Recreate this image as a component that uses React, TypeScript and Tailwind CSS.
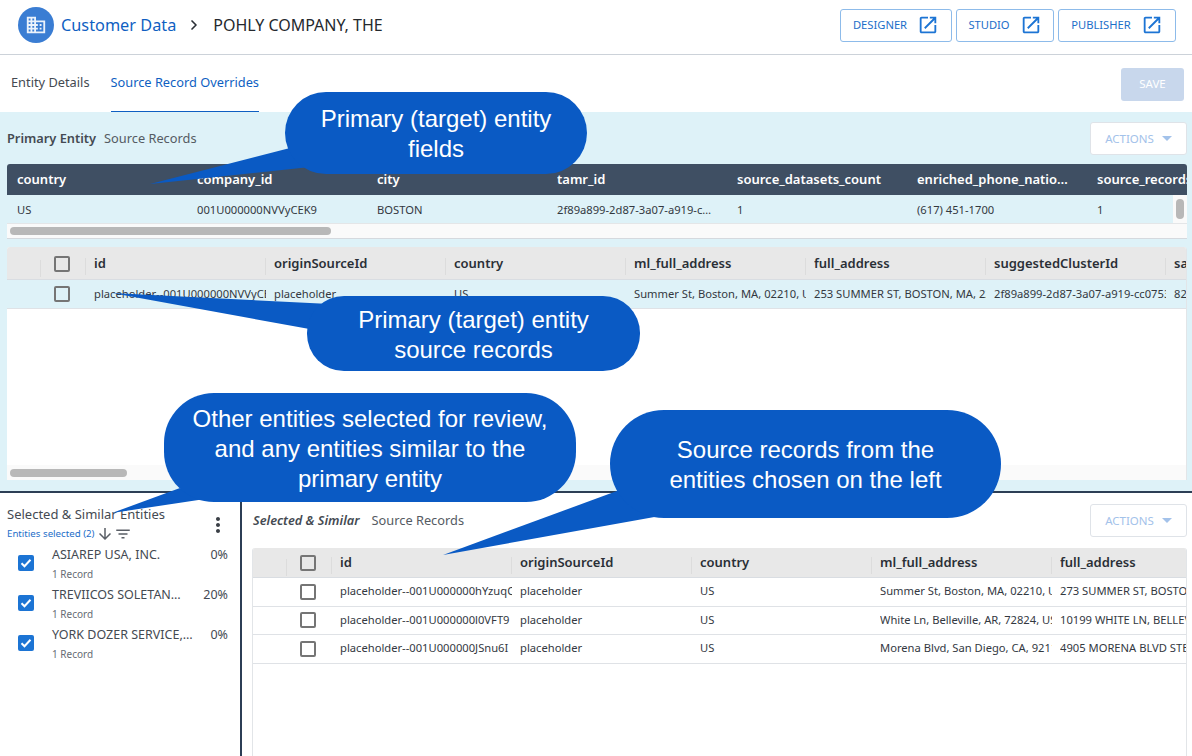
import { ChevronRight } from "lucide-react";

const font = "font-['Noto_Sans',sans-serif]";

const entityColumns = ["country", "company_id", "city", "tamr_id", "source_datasets_count", "enriched_phone_natio…", "source_records"];
const entityRow = ["US", "001U000000NVVyCEK9", "BOSTON", "2f89a899-2d87-3a07-a919-c…", "1", "(617) 451-1700", "1"];

const sourceColumns = ["id", "originSourceId", "country", "ml_full_address", "full_address", "suggestedClusterId", "sa"];
const primaryRow = [
  "placeholder--001U000000NVVyCEK9",
  "placeholder",
  "US",
  "Summer St, Boston, MA, 02210, USA",
  "253 SUMMER ST, BOSTON, MA, 22",
  "2f89a899-2d87-3a07-a919-cc0753",
  "82",
];
const similarRows = [
  ["placeholder--001U000000hYzuqQ", "placeholder", "US", "Summer St, Boston, MA, 02210, USA", "273 SUMMER ST, BOSTON"],
  ["placeholder--001U000000l0VFT9", "placeholder", "US", "White Ln, Belleville, AR, 72824, USA", "10199 WHITE LN, BELLEVILLE"],
  ["placeholder--001U000000JSnu6I", "placeholder", "US", "Morena Blvd, San Diego, CA, 92117", "4905 MORENA BLVD STE 1"],
];
const entities = [
  { name: "ASIAREP USA, INC.", pct: "0%" },
  { name: "TREVIICOS SOLETAN…", pct: "20%" },
  { name: "YORK DOZER SERVICE,…", pct: "0%" },
];

const ExternalIcon = () => (
  <svg viewBox="0 0 24 24" className="size-[22px] fill-[#1c74d4]">
    <path d="M19 19H5V5h7V3H5c-1.11 0-2 .9-2 2v14c0 1.1.89 2 2 2h14c1.1 0 2-.9 2-2v-7h-2v7zM14 3v2h3.59l-9.83 9.83 1.41 1.41L19 6.41V10h2V3h-7z" />
  </svg>
);

const LinkButton = ({ label, width }: { label: string; width: string }) => (
  <button className={`${width} h-[33px] flex items-center justify-center gap-2.5 rounded-[3px] border border-[#8dbbea] bg-white text-[11.2px] text-[#1c6ec9]`}>
    {label}
    <ExternalIcon />
  </button>
);

const ActionsButton = () => (
  <button className="w-[97px] h-[33px] flex items-center justify-center gap-2 rounded-[3px] border border-[#dfe3e8] bg-white text-[11.5px] text-[#a3c2ea]">
    ACTIONS
    <span className="w-0 h-0 border-x-[5px] border-x-transparent border-t-[5px] border-t-[#a3c2ea]" />
  </button>
);

const Checkbox = () => <span className="block size-4 rounded-[2px] border-2 border-[#757575] bg-transparent" />;

const Checked = () => (
  <span className="size-4 rounded-[2px] bg-[#1c74d4] flex items-center justify-center">
    <svg viewBox="0 0 16 16" className="size-4 fill-none stroke-white stroke-2">
      <path d="M3.5 8.2l3 3 6-6.4" />
    </svg>
  </span>
);

const Cell = ({ children, head }: { children: string; head?: boolean }) => (
  <div className={`w-[172px] mr-2 flex-none overflow-hidden whitespace-nowrap ${head ? "text-[13px] font-semibold text-[#2a2f36]" : "text-[11.2px] text-[#33383f]"}`}>
    {children}
  </div>
);

const Divider = ({ pos }: { pos: string }) => <span className={`absolute ${pos} top-1 h-[17px] w-px bg-[#dcdcdc]`} />;

const SourceHead = ({ columns, height }: { columns: string[]; height: string }) => (
  <div className={`flex flex-none items-center ${height} bg-[#e8e8e8] border-b border-[#d9dde2]`}>
    <div className="w-[87px] flex-none flex justify-center pl-[23px] relative">
      <Divider pos="left-[33px]" />
      <Checkbox />
    </div>
    {columns.map((c) => (
      <div key={c} className="relative">
        <Divider pos="-left-[9px]" />
        <Cell head>{c}</Cell>
      </div>
    ))}
  </div>
);

const SourceRow = ({ cells, tint, height }: { cells: string[]; tint?: boolean; height: string }) => (
  <div className={`flex flex-none items-center ${height} border-b border-[#dfe2e6] ${tint ? "bg-[#def2f8]" : "bg-white"}`}>
    <div className="w-[87px] flex-none flex justify-center pl-[23px]">
      <Checkbox />
    </div>
    {cells.map((c, i) => (
      <Cell key={i}>{c}</Cell>
    ))}
  </div>
);

const Callout = ({ box, lines }: { box: string; lines: string[] }) => (
  <div className={`absolute ${box} bg-[#0a5ac4] flex flex-col items-center justify-center pt-0.5 text-white text-[24px] leading-[30px] font-['Liberation_Sans',sans-serif]`}>
    {lines.map((l) => (
      <span key={l} className="whitespace-nowrap">{l}</span>
    ))}
  </div>
);

export default function App() {
  return (
    <div className={`relative w-[1192px] h-[756px] overflow-hidden bg-white flex flex-col ${font}`}>
      <header className="h-[55px] flex-none flex items-center justify-between pl-[18px] pr-4 pb-[4px] border-b border-[#ccd2d9]">
        <div className="flex items-center">
          <span className="size-9 rounded-full bg-[#3a7dd3] flex items-center justify-center">
            <svg viewBox="0 0 24 24" className="size-[22px] fill-white/90">
              <path d="M12 7V3H2v18h20V7H12zM6 19H4v-2h2v2zm0-4H4v-2h2v2zm0-4H4V9h2v2zm0-4H4V5h2v2zm4 12H8v-2h2v2zm0-4H8v-2h2v2zm0-4H8V9h2v2zm0-4H8V5h2v2zm10 12h-8v-2h2v-2h-2v-2h2v-2h-2V9h8v10zm-2-8h-2v2h2v-2zm0 4h-2v2h2v-2z" />
            </svg>
          </span>
          <span className="ml-[7px] text-[16.3px] text-[#0f5fc2]">Customer Data</span>
          <ChevronRight className="ml-[10px] size-4 text-[#2a2f36]" strokeWidth={2.5} />
          <span className="ml-[11px] text-[16px] text-[#25292e]">POHLY COMPANY, THE</span>
        </div>
        <div className="flex gap-1">
          <LinkButton label="DESIGNER" width="w-[112px]" />
          <LinkButton label="STUDIO" width="w-[98px]" />
          <LinkButton label="PUBLISHER" width="w-[118px]" />
        </div>
      </header>

      <div className="h-[57px] flex-none flex items-stretch justify-between pl-[11px] pr-2">
        <div className="flex gap-[21px] text-[12.8px]">
          <span className="flex items-center pb-px text-[#444a52]">Entity Details</span>
          <span className="flex items-center pb-px text-[#0f5fc2] border-b border-[#0f5fc2]">Source Record Overrides</span>
        </div>
        <div className="flex items-center pt-[1px]">
          <button className="w-[63px] h-[33px] rounded-[3px] bg-[#c8d7ec] text-[11.5px] text-white">SAVE</button>
        </div>
      </div>

      <section className="h-[379px] flex-none bg-[#def2f8] pl-[7px] pr-[5px] flex flex-col">
        <div className="h-[52px] flex-none flex items-center justify-between pt-[1px] text-[12.8px]">
          <div className="flex gap-2">
            <span className="font-semibold text-[#444a52]">Primary Entity</span>
            <span className="text-[#555b63]">Source Records</span>
          </div>
          <ActionsButton />
        </div>
        <div className="h-[75px] flex-none rounded-t-[3px] border-b border-[#d5d9de] overflow-hidden flex flex-col">
          <div className="h-[31px] flex-none flex items-center pl-2.5 bg-[#3f4f63] [&>div]:text-white">
            {entityColumns.map((c) => (
              <Cell key={c} head>{c}</Cell>
            ))}
          </div>
          <div className="h-7 flex-none flex items-center pl-2.5 pt-0.5 relative">
            {entityRow.map((c, i) => (
              <Cell key={i}>{c}</Cell>
            ))}
            <span className="absolute right-0 top-0 bottom-0 w-3.5 bg-[#fafafa] flex justify-center pt-1">
              <span className="w-2 h-5 rounded-full bg-[#b8b8b8]" />
            </span>
          </div>
          <div className="flex-1 bg-[#fafafa] border-t border-[#e4e6e8] flex items-center pl-[3px]">
            <span className="w-[321px] h-2 rounded-full bg-[#b8b8b8]" />
          </div>
        </div>
        <div className="h-[233px] mt-2 flex-none rounded-t-[3px] bg-white overflow-hidden flex flex-col border-r border-[#e2e5e8] relative">
          <SourceHead columns={sourceColumns} height="h-[33px] pt-0.5" />
          <SourceRow cells={primaryRow} tint height="h-[29px]" />
          <div className="flex-1" />
          <div className="h-[15px] flex-none bg-[#fafafa] flex items-center pl-[3px]">
            <span className="w-[117px] h-2 rounded-full bg-[#b8b8b8]" />
          </div>
        </div>
      </section>

      <div className="flex-1 flex border-t-2 border-[#2c3e55] min-h-0">
        <aside className="w-[242px] flex-none border-r-2 border-[#2c3e55] relative">
          <div className="pl-[7px] pt-3 text-[13px] leading-[18px] text-[#444a52]">Selected &amp; Similar Entities</div>
          <div className="pl-[7px] mt-[3px] flex items-center h-4">
            <span className="text-[9.7px] text-[#1c6ec9] mr-px">Entities selected (2)</span>
            <svg viewBox="0 0 24 24" className="size-[18px] fill-[#5a5f66]">
              <path d="M20 12l-1.41-1.41L13 16.17V4h-2v12.17l-5.58-5.59L4 12l8 8 8-8z" />
            </svg>
            <svg viewBox="0 0 24 24" className="size-[18px] fill-[#5a5f66]">
              <path d="M10 18h4v-2h-4v2zM3 6v2h18V6H3zm3 7h12v-2H6v2z" />
            </svg>
          </div>
          <svg viewBox="0 0 24 24" className="absolute left-[206px] top-[20px] size-6 fill-[#3a3f46]">
            <path d="M12 8c1.1 0 2-.9 2-2s-.9-2-2-2-2 .9-2 2 .9 2 2 2zm0 2c-1.1 0-2 .9-2 2s.9 2 2 2 2-.9 2-2-.9-2-2-2zm0 6c-1.1 0-2 .9-2 2s.9 2 2 2 2-.9 2-2-.9-2-2-2z" />
          </svg>
          <div className="mt-px flex flex-col">
            {entities.map((e) => (
              <div key={e.name} className="h-10 flex items-center pl-[18px] pr-3">
                <Checked />
                <div className="ml-[18px] flex-1 min-w-0">
                  <div className="flex justify-between text-[12.5px] leading-[18px] text-[#444a52] whitespace-nowrap">
                    <span>{e.name}</span>
                    <span>{e.pct}</span>
                  </div>
                  <div className="mt-[3px] text-[10px] leading-[14px] text-[#666c74]">1 Record</div>
                </div>
              </div>
            ))}
          </div>
        </aside>
        <main className="flex-1 min-w-0 pl-2.5 pr-[5px] flex flex-col">
          <div className="h-[55px] flex-none flex items-center justify-between text-[12.8px]">
            <div className="flex gap-3 pl-px">
              <span className="font-semibold italic text-[#444a52]">Selected &amp; Similar</span>
              <span className="text-[#555b63]">Source Records</span>
            </div>
            <ActionsButton />
          </div>
          <div className="flex-1 rounded-t-[3px] border-x border-[#e2e5e8] overflow-hidden flex flex-col">
            <SourceHead columns={sourceColumns.slice(0, 5)} height="h-[30px]" />
            {similarRows.map((r) => (
              <SourceRow key={r[0]} cells={r} height="h-[28.5px]" />
            ))}
          </div>
        </main>
      </div>

      {/* callouts laid over the screen */}
      <svg className="absolute inset-0 w-[1192px] h-[756px] fill-[#0a5ac4] pointer-events-none" viewBox="0 0 1192 756">
        <polygon points="290,148 150,184 310,167" />
        <polygon points="330,304 112,293 315,330" />
        <polygon points="180,488 112,513 205,499" />
        <polygon points="625,488 443,555 660,516" />
      </svg>
      <Callout box="left-[285px] top-[92px] w-[302px] h-[82px] rounded-[41px]" lines={["Primary (target) entity", "fields"]} />
      <Callout box="left-[307px] top-[296px] w-[333px] h-[75px] rounded-[37px]" lines={["Primary (target) entity", "source records"]} />
      <Callout box="left-[164px] top-[393px] w-[412px] h-[109px] rounded-[50px]" lines={["Other entities selected for review,", "and any entities similar to the", "primary entity"]} />
      <Callout box="left-[610px] top-[410px] w-[391px] h-[108px] rounded-[54px]" lines={["Source records from the", "entities chosen on the left"]} />
    </div>
  );
}
